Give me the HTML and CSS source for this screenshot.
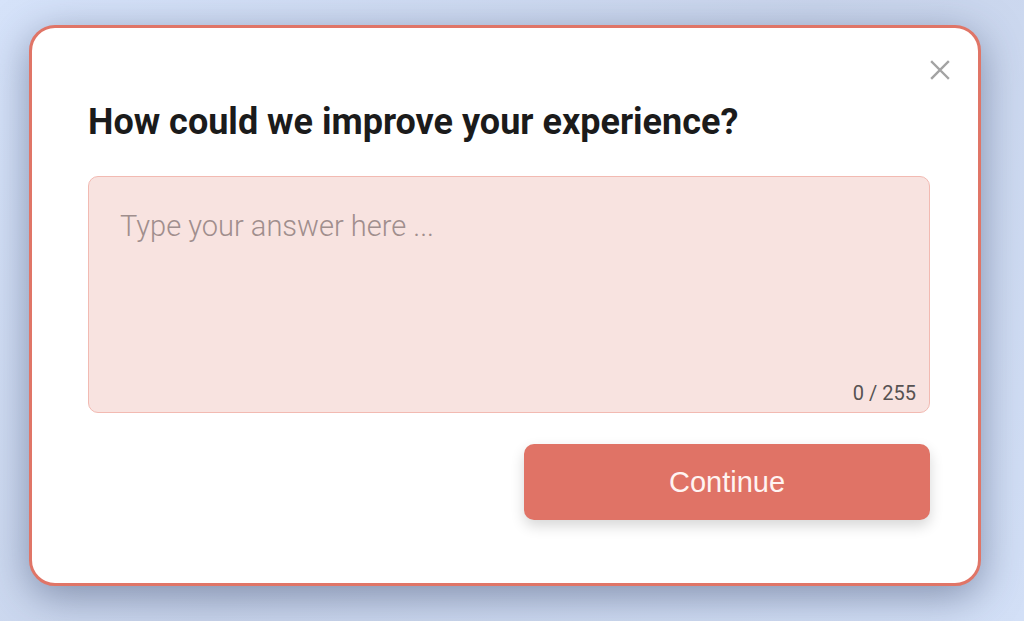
FILE: index.html
```html
<!DOCTYPE html>
<html>
<head>
    <link rel="stylesheet" href="styles.css">
</head>

<body>
    <div class="modal">
        <button class="close" type="button">
            <svg width="20" height="20" viewBox="0 0 20 20">
                <path d="M2 2L18 18M18 2L2 18" stroke="#a3a3a3" stroke-width="2.4" stroke-linecap="square"/>
            </svg>
        </button>
        <h2 class="title">How could we improve your experience?</h2>
        <div class="field">
            <textarea id="answer" maxlength="255" placeholder="Type your answer here ..."></textarea>
            <span class="counter" id="counter">0 / 255</span>
        </div>
        <div class="actions">
            <button class="continue" type="button">Continue</button>
        </div>
    </div>

    <script>
        var answer = document.getElementById("answer");
        answer.addEventListener("input", () => {
            document.getElementById("counter").textContent = answer.value.length + " / 255";
        })
    </script>
</body>

</html>
```

FILE: styles.css
```css
body{
    margin: 0;
    height: 621px;
    overflow: hidden;
    background: linear-gradient(135deg, #d6e3fa 0%, #c9d5ec 50%, #d3e0f7 100%);
    font-family: Roboto, "Liberation Sans", sans-serif;
}
.modal{
    position: relative;
    box-sizing: border-box;
    width: 952px;
    height: 561px;
    margin: 25px 0 0 29px;
    padding: 72px 48px 0 56px;
    background: #fff;
    border: 3px solid #e07567;
    border-radius: 26px;
    box-shadow: 0 10px 40px rgba(55, 70, 105, 0.5);
}
.close{
    position: absolute;
    top: 32px;
    right: 28px;
    padding: 0;
    border: none;
    background: none;
    cursor: pointer;
}
.close svg{
    display: block;
}
.title{
    margin: 0 0 32px 0;
    font-size: 36px;
    line-height: 44px;
    font-weight: 700;
    color: #1b1b1b;
}
.field{
    position: relative;
}
textarea{
    display: block;
    box-sizing: border-box;
    width: 100%;
    height: 237px;
    padding: 32px 31px;
    resize: none;
    font-family: Roboto, "Liberation Sans", sans-serif;
    font-size: 29px;
    font-weight: 300;
    color: #333;
    background: #f8e3e0;
    border: 1.5px solid #f2bab2;
    border-radius: 10px;
    outline: none;
}
textarea::placeholder{
    color: #a08e8d;
}
.counter{
    position: absolute;
    right: 14px;
    bottom: 8px;
    font-size: 20px;
    color: #565252;
}
.actions{
    display: flex;
    justify-content: flex-end;
    margin-top: 31px;
}
.continue{
    width: 406px;
    height: 76px;
    border: none;
    border-radius: 10px;
    background: #e07366;
    color: #fff4f2;
    font-family: "Liberation Sans", Arial, sans-serif;
    font-size: 29px;
    box-shadow: 0 6px 14px rgba(0, 0, 0, 0.16);
    cursor: pointer;
}
.continue:hover{
    background: #d4604f;
}
```
